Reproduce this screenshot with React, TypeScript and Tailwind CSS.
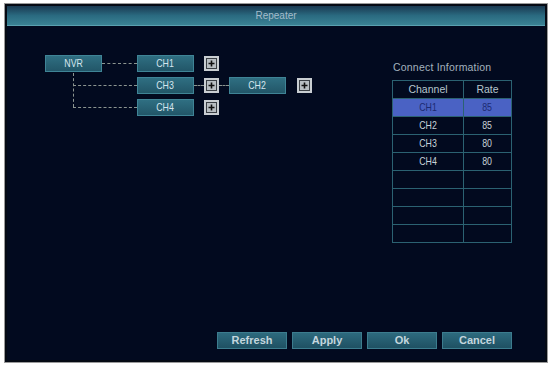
import React from "react";

const font = { fontFamily: '"Liberation Sans", Arial, sans-serif' };

function Narrow({ children }: { children: React.ReactNode }) {
  return <span className="inline-block scale-x-[0.8] text-[11px] leading-none">{children}</span>;
}

function Node({ label }: { label: string }) {
  return (
    <div className="w-[57px] h-[17px] shrink-0 flex items-center justify-center border border-[#3f8496] bg-gradient-to-b from-[#2f6f82] to-[#225668] text-[#d6e6ee]">
      <Narrow>{label}</Narrow>
    </div>
  );
}

function Plus() {
  return (
    <div className="w-[15px] h-[15px] shrink-0 bg-[#c9ced2] p-[2px]">
      <div className="w-full h-full border border-[#3a3f44] bg-[#b8bec2] flex items-center justify-center">
        <svg width="7" height="7" viewBox="0 0 7 7">
          <path d="M3.5 0.5v6M0.5 3.5h6" stroke="#111" strokeWidth="1.6" />
        </svg>
      </div>
    </div>
  );
}

function Dash({ w }: { w: string }) {
  return <div className={`${w} h-0 shrink-0 border-t border-dashed border-[#8c9590]`} />;
}

const rows = [
  ["CH1", "85"],
  ["CH2", "85"],
  ["CH3", "80"],
  ["CH4", "80"],
  ["", ""],
  ["", ""],
  ["", ""],
  ["", ""],
];

function Btn({ label }: { label: string }) {
  return (
    <div className="w-[70px] h-[17px] flex items-center justify-center border border-[#3c7c8e] bg-gradient-to-b from-[#2d6a7e] to-[#1f5163] text-[11px] font-bold text-[#c4d6de]">
      {label}
    </div>
  );
}

export default function App() {
  return (
    <div className="w-[550px] h-[367px] bg-white pt-[3px] pl-[4px]" style={font}>
      <div className="w-[544px] h-[360px] border border-[#9a9a9a] bg-[#050a14] p-[2px] flex flex-col">
        <div className="h-[20px] flex items-center justify-center bg-gradient-to-b from-[#1a3a52] via-[#2a6a80] to-[#3a8294] border-b border-[#5aa0b0] text-[10px] text-[#a4bccb]">
          Repeater
        </div>
        <div className="flex-1 bg-[#020a1f] flex flex-col">
          <div className="flex">
            {/* diagram */}
            <div className="relative ml-[38px] mt-[29px] w-[330px] flex flex-col gap-[5px]">
              <div className="absolute left-[28px] top-[18px] w-0 h-[34px] border-l border-dashed border-[#8c9590]" />
              <div className="flex items-center">
                <Node label="NVR" />
                <Dash w="w-[35px]" />
                <Node label="CH1" />
                <div className="ml-[10px]"><Plus /></div>
              </div>
              <div className="flex items-center pl-[28px]">
                <Dash w="w-[64px]" />
                <Node label="CH3" />
                <Dash w="w-[10px]" />
                <Plus />
                <Dash w="w-[10px]" />
                <Node label="CH2" />
                <div className="ml-[11px]"><Plus /></div>
              </div>
              <div className="flex items-center pl-[28px]">
                <Dash w="w-[64px]" />
                <Node label="CH4" />
                <div className="ml-[10px]"><Plus /></div>
              </div>
            </div>
            {/* connect info */}
            <div className="ml-[17px] mt-[36px] w-[120px]">
              <div className="text-[10.5px] text-[#a2b2be] leading-none mb-[7px] pl-[1px] tracking-[0.2px]">Connect Information</div>
              <table className="border-collapse w-[120px] text-[10.5px] leading-none">
                <thead>
                  <tr className="h-[18px]">
                    <th className="w-[71px] border border-[#2b6272] font-normal text-[#b6c6ce]">Channel</th>
                    <th className="border border-[#2b6272] font-normal text-[#b6c6ce]">Rate</th>
                  </tr>
                </thead>
                <tbody>
                  {rows.map((r, i) => (
                    <tr key={i} className={i === 0 ? "h-[18px] bg-[#4a62c4] text-[#1c2a72]" : "h-[18px] text-[#c8d2da]"}>
                      <td className="border border-[#2b6272] text-center"><Narrow>{r[0]}</Narrow></td>
                      <td className="border border-[#2b6272] text-center"><Narrow>{r[1]}</Narrow></td>
                    </tr>
                  ))}
                </tbody>
              </table>
            </div>
          </div>
          <div className="mt-auto mb-[11px] ml-[210px] flex gap-[5px]">
            <Btn label="Refresh" />
            <Btn label="Apply" />
            <Btn label="Ok" />
            <Btn label="Cancel" />
          </div>
        </div>
      </div>
    </div>
  );
}
